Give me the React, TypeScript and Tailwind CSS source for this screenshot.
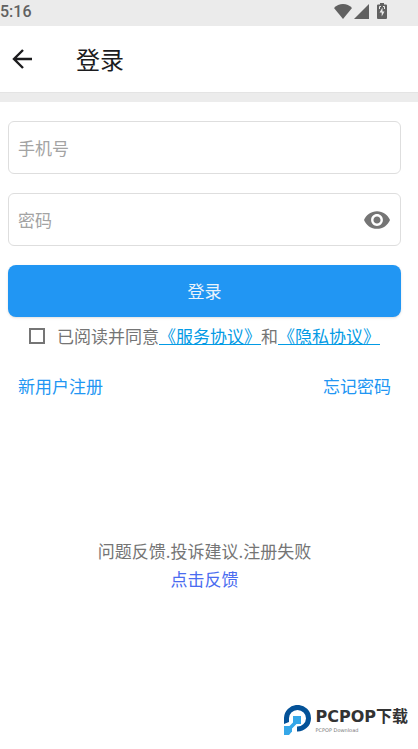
import { useState } from 'react';
import clsx from 'clsx';

const fieldClass =
  'h-[53px] w-full rounded-md border border-[#dedede] bg-white px-[9px] text-[17px] text-[#333333] outline-none placeholder:text-[#a3a3a3]';

function StatusBar() {
  return (
    <div className="flex h-[26px] items-start justify-between bg-[#ebebeb] pr-[31px] text-[#616161]">
      <span className="font-[Roboto,sans-serif] text-[16px] leading-6 font-medium">5:16</span>
      <div className="flex h-[22px] items-center">
        <svg viewBox="0 0 18 15" className="h-[15px] w-[18px]" fill="currentColor">
          <path d="M9 15 0 4C2.500 1.400 5.500 0 9 0s6.500 1.400 9 4z" />
        </svg>
        <svg viewBox="0 0 15 15" className="ml-0.5 h-[15px] w-[15px]" fill="currentColor">
          <path d="M15 0v15H0z" />
        </svg>
        <svg viewBox="0 0 10 16" className="ml-2 h-4 w-[10px]" fill="currentColor">
          <path d="M3 0h4v1.500h2a1 1 0 0 1 1 1V15a1 1 0 0 1-1 1H1a1 1 0 0 1-1-1V2.500a1 1 0 0 1 1-1h2z" />
          <path d="M2.500 6V3.500h1.500M7.500 6V3.500H6" fill="none" stroke="#ebebeb" />
          <path d="M5.500 4.500v4H7.500L4.700 13.500v-4H2.500z" fill="#ebebeb" />
        </svg>
      </div>
    </div>
  );
}

function EyeIcon() {
  return (
    <svg viewBox="1 4.500 22 15" className="h-[18px] w-[26px]" fill="currentColor">
      <path d="M12 4.500C7 4.500 2.730 7.610 1 12c1.730 4.390 6 7.500 11 7.500s9.270-3.110 11-7.500c-1.730-4.390-6-7.500-11-7.500zM12 17c-2.760 0-5-2.240-5-5s2.240-5 5-5 5 2.240 5 5-2.240 5-5 5zm0-8c-1.660 0-3 1.340-3 3s1.340 3 3 3 3-1.340 3-3-1.340-3-3-3z" />
    </svg>
  );
}

function Brand() {
  return (
    <div className="mt-auto mr-2.5 mb-3.5 flex items-center gap-1 self-end">
      <svg viewBox="0 0 27 30" className="h-[30px] w-[27px]">
        <path d="M0 19V13.500A13.500 13.300 0 1 1 13 26.500V21.500A8.500 8.300 0 1 0 5 13.500V17z" fill="#045298" />
        <path d="M9 11h8v8h-4.500l-5 5L5 21.500l4-4z" fill="#35a7e8" />
        <path d="M0 21h8v5.500L5 30H0z" fill="#35a7e8" />
      </svg>
      <div className="flex flex-col text-[#333333]">
        <span className="font-['DejaVu_Sans','Noto_Sans_CJK_SC',sans-serif] text-[16px] leading-5 font-bold">
          PCPOP下载
        </span>
        <span className="font-['DejaVu_Sans',sans-serif] text-[5px] leading-[6px] text-[#777777]">
          PCPOP Download
        </span>
      </div>
    </div>
  );
}

export default function App() {
  const [showPassword, setShowPassword] = useState(false);
  const [agreed, setAgreed] = useState(false);

  return (
    <div className="flex min-h-screen flex-col bg-white font-['Noto_Sans_CJK_SC',sans-serif] text-[17px] leading-6 text-[#757575]">
      <StatusBar />

      <header className="flex h-[66px] items-center gap-[42px] pl-3 text-[#1c1c1e]">
        <button aria-label="返回">
          <svg viewBox="0 0 22 20" className="h-5 w-[22px]" fill="none" stroke="currentColor" strokeWidth="2.4">
            <path d="M20 10H2.500M11 1 2 10l9 9" />
          </svg>
        </button>
        <h1 className="text-[24px] leading-8">登录</h1>
      </header>
      <div className="h-2.5 border-t border-[#e4e4e4] bg-[#ececec]" />

      <form className="pt-[19px] pr-[17px] pl-2" onSubmit={(e) => e.preventDefault()}>
        <input type="tel" aria-label="手机号" placeholder="手机号" className={fieldClass} />

        <div className="relative mt-[19px]">
          <input
            type={showPassword ? 'text' : 'password'}
            aria-label="密码"
            placeholder="密码"
            className={clsx(fieldClass, 'pr-12')}
          />
          <button
            type="button"
            aria-label="显示密码"
            onClick={() => setShowPassword(!showPassword)}
            className="absolute inset-y-0 right-0 flex items-center px-[11px]"
          >
            <EyeIcon />
          </button>
        </div>

        <button
          type="submit"
          className="mt-[19px] block h-[52px] w-full rounded-lg bg-[#2196f3] text-[#eaf3fb] shadow-sm"
        >
          登录
        </button>

        <div className="mt-[7px] flex items-center justify-center gap-3">
          <input
            id="agree"
            type="checkbox"
            checked={agreed}
            onChange={(e) => setAgreed(e.target.checked)}
            className="size-4 shrink-0 appearance-none border-2 border-[#757575] checked:bg-[#2196f3]"
          />
          <p className="whitespace-nowrap">
            <label htmlFor="agree">已阅读并同意</label>
            <a href="#service" className="text-[#039be5] underline">《服务协议》</a>
            和
            <a href="#privacy" className="text-[#039be5] underline">《隐私协议》</a>
          </p>
        </div>

        <div className="mt-[26px] flex justify-between px-2.5 text-[#2196f3]">
          <a href="#register">新用户注册</a>
          <a href="#forgot">忘记密码</a>
        </div>
      </form>

      <div className="mt-[141px] flex flex-col items-center gap-1 pr-[9px]">
        <p>问题反馈.投诉建议.注册失败</p>
        <a href="#feedback" className="text-[#4a6cf0]">点击反馈</a>
      </div>

      <Brand />
    </div>
  );
}
